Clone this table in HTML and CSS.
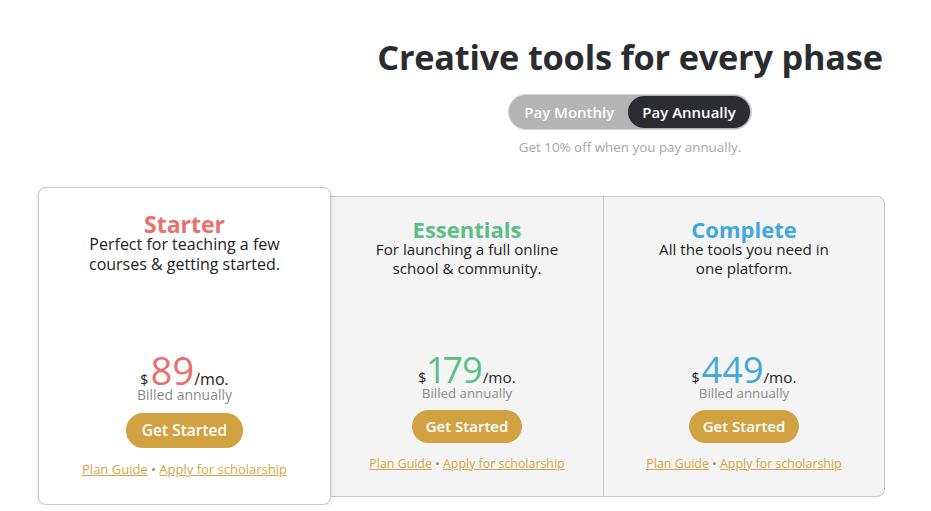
FILE: index.html
```html
<!DOCTYPE html>
<html lang="en">
<head>
    <meta charset="UTF-8">
    <meta name="viewport" content="width=device-width, initial-scale=1.0">
    <title>Pricing</title>
    <link rel="stylesheet" href="styles.css">
</head>
<body>

    <div class="header">
        <h1>Creative tools for every phase</h1>
        <div class="toggle">
            <span class="toggle-option">Pay Monthly</span>
            <span class="toggle-option active">Pay Annually</span>
        </div>
        <p class="discount">Get 10% off when you pay annually.</p>
    </div>

    <div class="plans">
        <div class="plan featured">
            <h2 class="plan-name starter">Starter</h2>
            <p class="plan-desc">Perfect for teaching a few<br>courses &amp; getting started.</p>
            <div class="price">
                <span class="currency">$</span><span class="amount starter">89</span><span class="per">/mo.</span>
            </div>
            <p class="billed">Billed annually</p>
            <a class="btn" href="#">Get Started</a>
            <p class="links"><a href="#">Plan Guide</a> &bull; <a href="#">Apply for scholarship</a></p>
        </div>

        <div class="plan-group">
            <div class="plan essentials-col">
                <h2 class="plan-name essentials">Essentials</h2>
                <p class="plan-desc">For launching a full online<br>school &amp; community.</p>
                <div class="price">
                    <span class="currency">$</span><span class="amount essentials">179</span><span class="per">/mo.</span>
                </div>
                <p class="billed">Billed annually</p>
                <a class="btn" href="#">Get Started</a>
                <p class="links"><a href="#">Plan Guide</a> &bull; <a href="#">Apply for scholarship</a></p>
            </div>

            <div class="plan complete-col">
                <h2 class="plan-name complete">Complete</h2>
                <p class="plan-desc">All the tools you need in<br>one platform.</p>
                <div class="price">
                    <span class="currency">$</span><span class="amount complete">449</span><span class="per">/mo.</span>
                </div>
                <p class="billed">Billed annually</p>
                <a class="btn" href="#">Get Started</a>
                <p class="links"><a href="#">Plan Guide</a> &bull; <a href="#">Apply for scholarship</a></p>
            </div>
        </div>
    </div>

</body>
</html>
```

FILE: styles.css
```css
body {
    font-family: 'Open Sans', 'Noto Sans', Arial, sans-serif;
    margin: 0;
    padding: 0;
    background-color: #fff;
    color: #222;
}

.header {
    width: 520px;
    margin-left: 370px;
    padding-top: 34px;
    display: flex;
    flex-direction: column;
    align-items: center;
}

h1 {
    margin: 0;
    font-size: 34.3px;
    font-weight: 700;
    color: #2a2c30;
    line-height: 46px;
    letter-spacing: -0.2px;
}

.toggle {
    margin-top: 14px;
    display: flex;
    align-items: center;
    background-color: #b4b4b4;
    border: 1px solid #d2d2d2;
    border-radius: 20px;
    padding: 1px 1px 1px 0;
    height: 36px;
    box-sizing: border-box;
}

.toggle-option {
    color: #fff;
    font-weight: 600;
    font-size: 15px;
    padding: 0 14px 0 15px;
    line-height: 32px;
    border-radius: 18px;
}

.toggle-option.active {
    background-color: #2b2d31;
    padding: 0 14px;
}

.discount {
    margin: 8px 0 0;
    font-size: 13.4px;
    line-height: 18px;
    color: #a6a6a6;
}

.plans {
    display: flex;
    align-items: center;
    margin: 31px 0 0 38px;
}

.plan {
    display: flex;
    flex-direction: column;
    align-items: center;
    box-sizing: border-box;
    text-align: center;
}

.featured {
    position: relative;
    z-index: 1;
    width: 293px;
    height: 318px;
    background-color: #fff;
    border: 1px solid #c8c8c8;
    border-radius: 8px;
    box-shadow: 0 1px 5px rgba(0, 0, 0, 0.13);
    padding-top: 24px;
}

.plan-group {
    display: flex;
    height: 301px;
    background-color: #f4f4f4;
    border: 1px solid #c8c8c8;
    border-left: none;
    border-radius: 0 8px 8px 0;
    box-sizing: border-box;
}

.essentials-col {
    width: 273px;
    border-right: 1px solid #c8c8c8;
    padding-top: 21px;
}

.complete-col {
    width: 280px;
    padding-top: 21px;
}

.plan-name {
    margin: 0;
    font-size: 22px;
    font-weight: 700;
    line-height: 22px;
}

.plan-desc {
    margin: 0;
    font-size: 15.2px;
    line-height: 19px;
    color: #222;
}

.starter {
    color: #e9706a;
}

.essentials {
    color: #5dbe85;
}

.complete {
    color: #41a8da;
}

.price {
    margin-top: 77px;
    display: flex;
    align-items: baseline;
    line-height: 30px;
    height: 30px;
}

.currency {
    font-size: 14px;
    margin-right: 2px;
}

.amount {
    font-size: 36px;
    font-weight: 500;
    font-variant-numeric: proportional-nums;
}

.per {
    font-size: 15.3px;
}

.billed {
    margin: -1px 0 0;
    font-size: 13.3px;
    line-height: 18px;
    color: #8a8a8a;
}

.btn {
    margin-top: 8px;
    display: inline-block;
    background-color: #d1a242;
    color: #fff;
    font-weight: 600;
    font-size: 15px;
    text-decoration: none;
    border-radius: 17px;
    padding: 0 14px;
    line-height: 33px;
}

.links {
    margin: 12px 0 0;
    font-size: 12.4px;
    line-height: 18px;
    color: #8a8a8a;
}

.links a {
    color: #d4a545;
}

/* the highlighted plan sits a little larger than the others */
.featured .plan-name {
    font-size: 23px;
    line-height: 24px;
}

.featured .plan-desc {
    margin-top: -2px;
    font-size: 16px;
    line-height: 20px;
}

.featured .price {
    margin-top: 81px;
}

.featured .amount {
    font-size: 38px;
}

.featured .per {
    font-size: 16px;
}

.featured .billed {
    margin-top: 1px;
    font-size: 14px;
}

.featured .btn {
    margin-top: 9px;
    font-size: 15.5px;
    padding: 0 16px;
    line-height: 35px;
}

.featured .links {
    margin-top: 12px;
    font-size: 13px;
}
```
